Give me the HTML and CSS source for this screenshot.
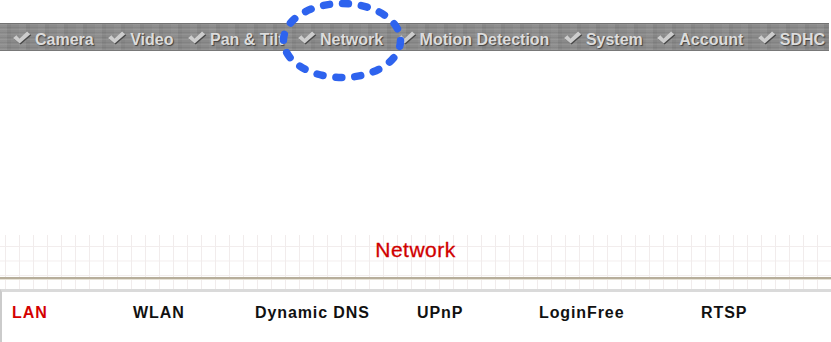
FILE: index.html
```html
<!DOCTYPE html>
<html lang="en">

<head>
    <meta charset="UTF-8">
    <meta name="viewport"
          content="width=device-width, initial-scale=1.0">
    <title>Network</title>
    <link rel="stylesheet" href="styles.css">
</head>

<body>
    <div class="menu">
        <ul class="menu-list">
            <li><svg class="check" viewBox="0 0 20 14"><path d="M1 7.5 L4.5 4.5 L8 8 L16 0.5 L19.5 3.5 L8 13.5 Z"/></svg>Camera</li>
            <li><svg class="check" viewBox="0 0 20 14"><path d="M1 7.5 L4.5 4.5 L8 8 L16 0.5 L19.5 3.5 L8 13.5 Z"/></svg>Video</li>
            <li><svg class="check" viewBox="0 0 20 14"><path d="M1 7.5 L4.5 4.5 L8 8 L16 0.5 L19.5 3.5 L8 13.5 Z"/></svg>Pan &amp; Tilt</li>
            <li><svg class="check" viewBox="0 0 20 14"><path d="M1 7.5 L4.5 4.5 L8 8 L16 0.5 L19.5 3.5 L8 13.5 Z"/></svg>Network</li>
            <li><svg class="check" viewBox="0 0 20 14"><path d="M1 7.5 L4.5 4.5 L8 8 L16 0.5 L19.5 3.5 L8 13.5 Z"/></svg>Motion Detection</li>
            <li><svg class="check" viewBox="0 0 20 14"><path d="M1 7.5 L4.5 4.5 L8 8 L16 0.5 L19.5 3.5 L8 13.5 Z"/></svg>System</li>
            <li><svg class="check" viewBox="0 0 20 14"><path d="M1 7.5 L4.5 4.5 L8 8 L16 0.5 L19.5 3.5 L8 13.5 Z"/></svg>Account</li>
            <li><svg class="check" viewBox="0 0 20 14"><path d="M1 7.5 L4.5 4.5 L8 8 L16 0.5 L19.5 3.5 L8 13.5 Z"/></svg>SDHC</li>
        </ul>
    </div>

    <svg class="mark" viewBox="0 0 126 82">
        <ellipse cx="62" cy="40.5" rx="58.5" ry="37"/>
    </svg>

    <div class="header">
        <h2 class="title">Network</h2>
        <div class="rule"></div>
    </div>

    <div class="tabs">
        <span class="tab active">LAN</span>
        <span class="tab">WLAN</span>
        <span class="tab">Dynamic DNS</span>
        <span class="tab">UPnP</span>
        <span class="tab">LoginFree</span>
        <span class="tab">RTSP</span>
    </div>
</body>

</html>
```

FILE: styles.css
```css
* {
    padding: 0;
    margin: 0;
    box-sizing: border-box;
}

body {
    background: #fff;
    font-family: "Liberation Sans", Arial, sans-serif;
    position: relative;
    width: 831px;
    height: 342px;
    overflow: hidden;
}

.menu {
    margin-top: 23px;
    height: 28px;
    width: 829px;
    border-top: 1px solid #727272;
    border-bottom: 1px solid #787878;
    background-color: #8a8a8a;
    background-image:
        repeating-linear-gradient(180deg, rgba(255, 255, 255, 0.07) 0 1px, transparent 1px 3px, rgba(0, 0, 0, 0.06) 3px 4px, transparent 4px 5px),
        repeating-linear-gradient(90deg, rgba(255, 255, 255, 0.04) 0 7px, rgba(0, 0, 0, 0.04) 7px 11px, transparent 11px 19px);
}

.menu-list {
    list-style: none;
    display: flex;
    gap: 13.5px;
    padding-left: 12px;
    height: 100%;
    align-items: center;
}

.menu-list li {
    display: flex;
    align-items: center;
    white-space: nowrap;
    font-size: 16px;
    font-weight: bold;
    line-height: 20px;
    color: #dcdcdc;
    text-shadow: 1px 1px 1px #404040;
    padding-top: 5px;
}

.check {
    width: 19px;
    height: 13px;
    margin-right: 4px;
    margin-top: -4px;
    fill: #cdcdcd;
    filter: drop-shadow(1px 1px 0.5px #484848);
}

.mark {
    position: absolute;
    left: 280px;
    top: 0;
    width: 126px;
    height: 82px;
    fill: none;
    stroke: #2e63ee;
    stroke-width: 7.5;
    stroke-linecap: round;
    stroke-dasharray: 6 13;
}

.header {
    margin-top: 184px;
    height: 54px;
    padding-top: 4px;
    background-color: #fff;
    background-image:
        linear-gradient(90deg, #f1ecec 1px, transparent 1px),
        linear-gradient(180deg, #f2eded 1px, transparent 1px);
    background-size: 14px 14px, 14px 14.5px;
    background-position: 5px 0, 0 11px;
}

.title {
    text-align: center;
    font-size: 21px;
    font-weight: normal;
    line-height: 22px;
    color: #d00000;
    letter-spacing: 0.5px;
    -webkit-text-stroke: 0.3px #d00000;
}

.rule {
    margin-top: 16px;
    height: 3px;
    border-top: 2px solid #b7ae9b;
    border-bottom: 1px solid #e6e2d6;
}

.tabs {
    display: grid;
    grid-template-columns: 121px 122px 162px 122px 162px auto;
    border-top: 3px solid #dadada;
    border-left: 2px solid #cbcbcb;
    padding: 11px 0 0 10px;
    height: 60px;
}

.tab {
    font-size: 16px;
    font-weight: bold;
    line-height: 20px;
    letter-spacing: 0.9px;
    color: #111;
}

.tab.active {
    color: #d40000;
}
```
